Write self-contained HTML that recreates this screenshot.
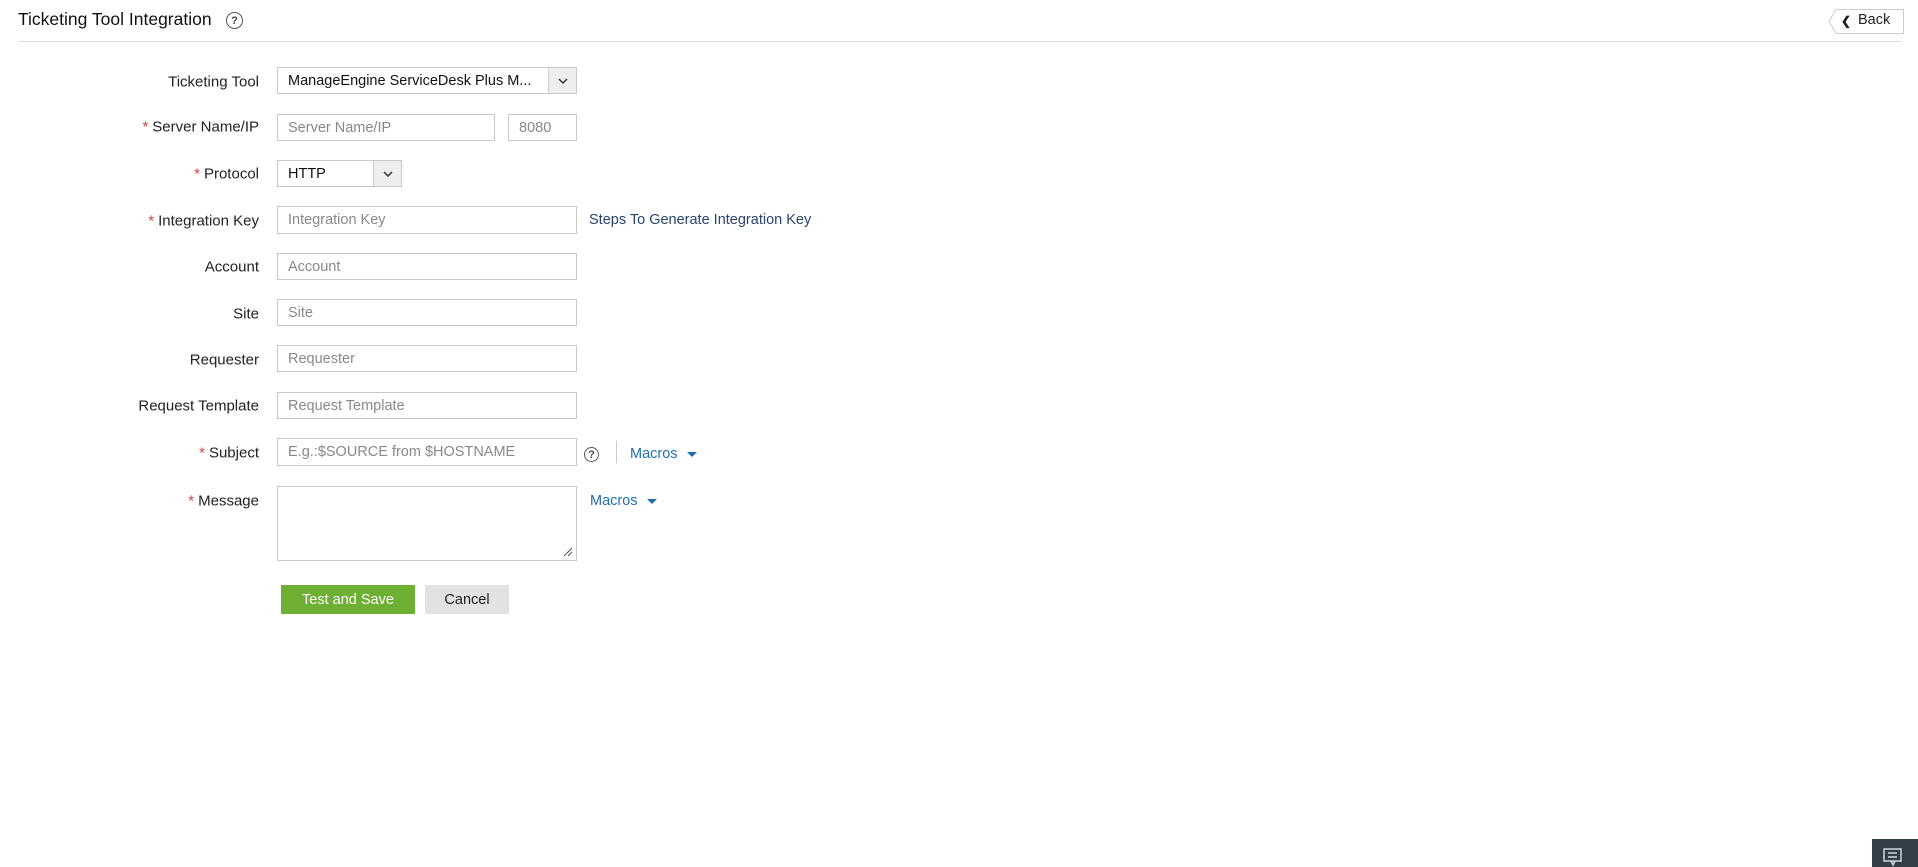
<!DOCTYPE html>
<html><head><meta charset="utf-8"><style>
*{box-sizing:border-box}
body{margin:0;width:1918px;height:867px;background:#fff;font-family:"Liberation Sans",sans-serif;color:#222;position:relative;overflow:hidden}
.a{position:absolute}
.lbl{position:absolute;right:1659px;font-size:15px;color:#222;white-space:nowrap;transform:translateY(-50%)}
.lbl b{color:#e0393e;font-weight:normal;margin-right:4px}
.in{position:absolute;border:1px solid #c8c8c8;background:#fff;font-size:14.5px;color:#888;padding-left:10px;display:flex;align-items:center}
.sel{color:#111}
.arr{position:absolute;top:0;right:0;bottom:0;width:28px;background:#eee;border-left:1px solid #ccc;display:flex;align-items:center;justify-content:center}
.mac{position:absolute;color:#1f6db5;font-size:14.5px;transform:translateY(-50%)}
.mac:after{content:"";display:inline-block;margin-left:9px;border-left:5px solid transparent;border-right:5px solid transparent;border-top:5px solid #1f6db5;vertical-align:middle}
.q{position:absolute;width:15px;height:15px;border:1.5px solid #555;border-radius:50%;font-size:11px;font-weight:bold;color:#444;display:flex;align-items:center;justify-content:center}
</style></head><body>
<div class="a" style="left:18px;top:9px;font-size:17.5px;color:#111">Ticketing Tool Integration</div>
<div class="q" style="left:226px;top:12px;width:17px;height:17px">?</div>
<div class="a" style="left:18px;top:41px;width:1884px;height:1px;background:#ddd"></div>
<svg class="a" style="left:1826px;top:8px" width="79" height="27"><path d="M10 1.5H77.5V25.5H10L3 13.5Z" fill="#fff" stroke="#ccc"/></svg>
<div class="a" style="left:1858px;top:12px;font-size:14.5px">Back</div>
<div class="a" style="left:1841px;top:14px;font-size:12px;font-weight:bold">&#10094;</div>

<div class="lbl" style="top:82px">Ticketing Tool</div>
<div class="in sel" style="left:277px;top:67px;width:300px;height:27px">ManageEngine ServiceDesk Plus M...<div class="arr"><svg width="10" height="6"><path d="M1 1l4 4 4-4" stroke="#333" stroke-width="1.5" fill="none"/></svg></div></div>

<div class="lbl" style="top:127px"><b>*</b>Server Name/IP</div>
<div class="in" style="left:277px;top:114px;width:218px;height:27px">Server Name/IP</div>
<div class="in" style="left:508px;top:114px;width:69px;height:27px">8080</div>

<div class="lbl" style="top:174px"><b>*</b>Protocol</div>
<div class="in sel" style="left:277px;top:160px;width:125px;height:27px">HTTP<div class="arr"><svg width="10" height="6"><path d="M1 1l4 4 4-4" stroke="#333" stroke-width="1.5" fill="none"/></svg></div></div>

<div class="lbl" style="top:221px"><b>*</b>Integration Key</div>
<div class="in" style="left:277px;top:206px;width:300px;height:28px">Integration Key</div>
<div class="a" style="left:589px;top:212px;font-size:14.5px;color:#27436e">Steps To Generate Integration Key</div>

<div class="lbl" style="top:267px">Account</div>
<div class="in" style="left:277px;top:253px;width:300px;height:27px">Account</div>
<div class="lbl" style="top:314px">Site</div>
<div class="in" style="left:277px;top:299px;width:300px;height:27px">Site</div>
<div class="lbl" style="top:360px">Requester</div>
<div class="in" style="left:277px;top:345px;width:300px;height:27px">Requester</div>
<div class="lbl" style="top:406px">Request Template</div>
<div class="in" style="left:277px;top:392px;width:300px;height:27px">Request Template</div>

<div class="lbl" style="top:453px"><b>*</b>Subject</div>
<div class="in" style="left:277px;top:438px;width:300px;height:28px">E.g.:$SOURCE from $HOSTNAME</div>
<div class="q" style="left:584px;top:447px">?</div>
<div class="a" style="left:616px;top:441px;width:1px;height:22px;background:#ccc"></div>
<div class="mac" style="left:630px;top:454px">Macros</div>

<div class="lbl" style="top:501px"><b>*</b>Message</div>
<div class="in" style="left:277px;top:486px;width:300px;height:75px"></div>
<svg class="a" style="left:563px;top:547px" width="10" height="10"><path d="M1 9L9 1M5 9L9 5" stroke="#555" stroke-width="1"/></svg>
<div class="mac" style="left:590px;top:501px">Macros</div>

<div class="a" style="left:281px;top:585px;width:134px;height:29px;background:#6db033;color:#fff;font-size:14.5px;display:flex;align-items:center;justify-content:center">Test and Save</div>
<div class="a" style="left:425px;top:585px;width:84px;height:29px;background:#e2e2e2;color:#222;font-size:14.5px;display:flex;align-items:center;justify-content:center">Cancel</div>

<div class="a" style="left:1872px;top:839px;width:46px;height:28px;background:#333f48"></div>
<svg class="a" style="left:1883px;top:848px" width="20" height="19"><rect x="1" y="1" width="17" height="12" fill="none" stroke="#cfd6dc" stroke-width="1.5"/><path d="M5 5h9M5 9h9" stroke="#cfd6dc" stroke-width="1.5"/><path d="M8 13l2 4 2-4" fill="none" stroke="#cfd6dc" stroke-width="1.5"/></svg>
</body></html>
